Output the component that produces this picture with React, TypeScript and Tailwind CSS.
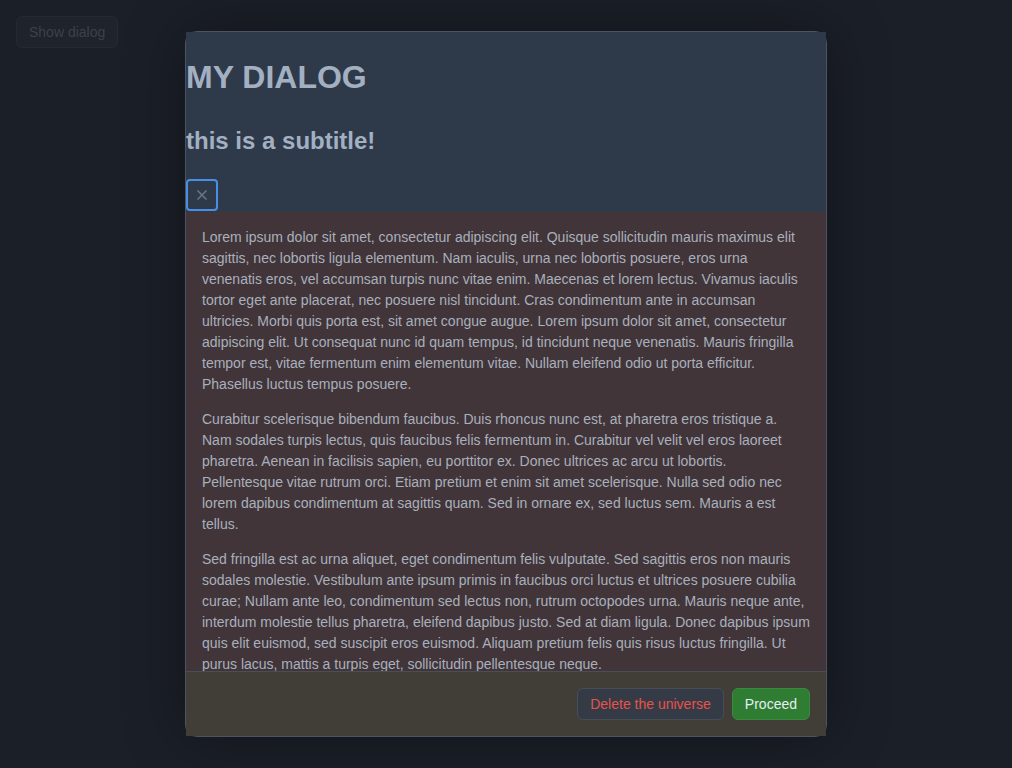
import React from "react";

const p1 =
  "Lorem ipsum dolor sit amet, consectetur adipiscing elit. Quisque sollicitudin mauris maximus elit sagittis, nec lobortis ligula elementum. Nam iaculis, urna nec lobortis posuere, eros urna venenatis eros, vel accumsan turpis nunc vitae enim. Maecenas et lorem lectus. Vivamus iaculis tortor eget ante placerat, nec posuere nisl tincidunt. Cras condimentum ante in accumsan ultricies. Morbi quis porta est, sit amet congue augue. Lorem ipsum dolor sit amet, consectetur adipiscing elit. Ut consequat nunc id quam tempus, id tincidunt neque venenatis. Mauris fringilla tempor est, vitae fermentum enim elementum vitae. Nullam eleifend odio ut porta efficitur. Phasellus luctus tempus posuere.";
const p2 =
  "Curabitur scelerisque bibendum faucibus. Duis rhoncus nunc est, at pharetra eros tristique a. Nam sodales turpis lectus, quis faucibus felis fermentum in. Curabitur vel velit vel eros laoreet pharetra. Aenean in facilisis sapien, eu porttitor ex. Donec ultrices ac arcu ut lobortis. Pellentesque vitae rutrum orci. Etiam pretium et enim sit amet scelerisque. Nulla sed odio nec lorem dapibus condimentum at sagittis quam. Sed in ornare ex, sed luctus sem. Mauris a est tellus.";
const p3 =
  "Sed fringilla est ac urna aliquet, eget condimentum felis vulputate. Sed sagittis eros non mauris sodales molestie. Vestibulum ante ipsum primis in faucibus orci luctus et ultrices posuere cubilia curae; Nullam ante leo, condimentum sed lectus non, rutrum octopodes urna. Mauris neque ante, interdum molestie tellus pharetra, eleifend dapibus justo. Sed at diam ligula. Donec dapibus ipsum quis elit euismod, sed suscipit eros euismod. Aliquam pretium felis quis risus luctus fringilla. Ut purus lacus, mattis a turpis eget, sollicitudin pellentesque neque.";

export default function App() {
  return (
    <div
      className="relative w-[1012px] h-[768px] bg-[#1b1f27] overflow-hidden"
      style={{ fontFamily: '"Liberation Sans", Arial, sans-serif' }}
    >
      <div className="p-4">
        <button className="h-8 px-3 text-[14px] rounded-md border border-[#252931] bg-[#1f232b] text-[#3c414a]">
          Show dialog
        </button>
      </div>

      <div className="absolute left-[185px] top-[31px] w-[642px] h-[706px] flex flex-col rounded-xl border border-[#4b5462] shadow-[0_0_60px_rgba(0,0,0,0.35)]">
        <div className="bg-[#2e3a4a] text-[#a3b0c2] flex flex-col items-start h-[180px] shrink-0">
          <h1 className="mt-[21px] text-[32px] leading-[48px] font-bold">MY DIALOG</h1>
          <h2 className="mt-[22px] text-[24px] leading-[36px] font-bold">this is a subtitle!</h2>
          <button className="mt-[20px] w-8 h-8 rounded-[4px] border-2 border-[#4a8fe7] flex items-center justify-center text-[#6b7584]">
            <svg width="12" height="12" viewBox="0 0 12 12" fill="none" stroke="currentColor" strokeWidth="1.5">
              <path d="M1.5 1.5 L10.5 10.5 M10.5 1.5 L1.5 10.5" />
            </svg>
          </button>
        </div>
        <div className="flex-1 min-h-0 overflow-hidden bg-[#413539] px-4 pt-[15px] text-[14px] leading-[21px] text-[#a9b0bc]">
          <p className="mb-[14px]">{p1}</p>
          <p className="mb-[14px]">{p2}</p>
          <p className="mb-[14px]">{p3}</p>
        </div>
        <div className="shrink-0 bg-[#413d37] border-t border-[#4a4f57] p-4 flex justify-end gap-2">
          <button className="h-8 px-3 text-[14px] rounded-md border border-[#474d57] bg-[#353b46] text-[#e5534b]">
            Delete the universe
          </button>
          <button className="h-8 px-3 text-[14px] rounded-md border border-[#3a8a3e] bg-[#2f7d32] text-[#e6edf3]">
            Proceed
          </button>
        </div>
      </div>
    </div>
  );
}
